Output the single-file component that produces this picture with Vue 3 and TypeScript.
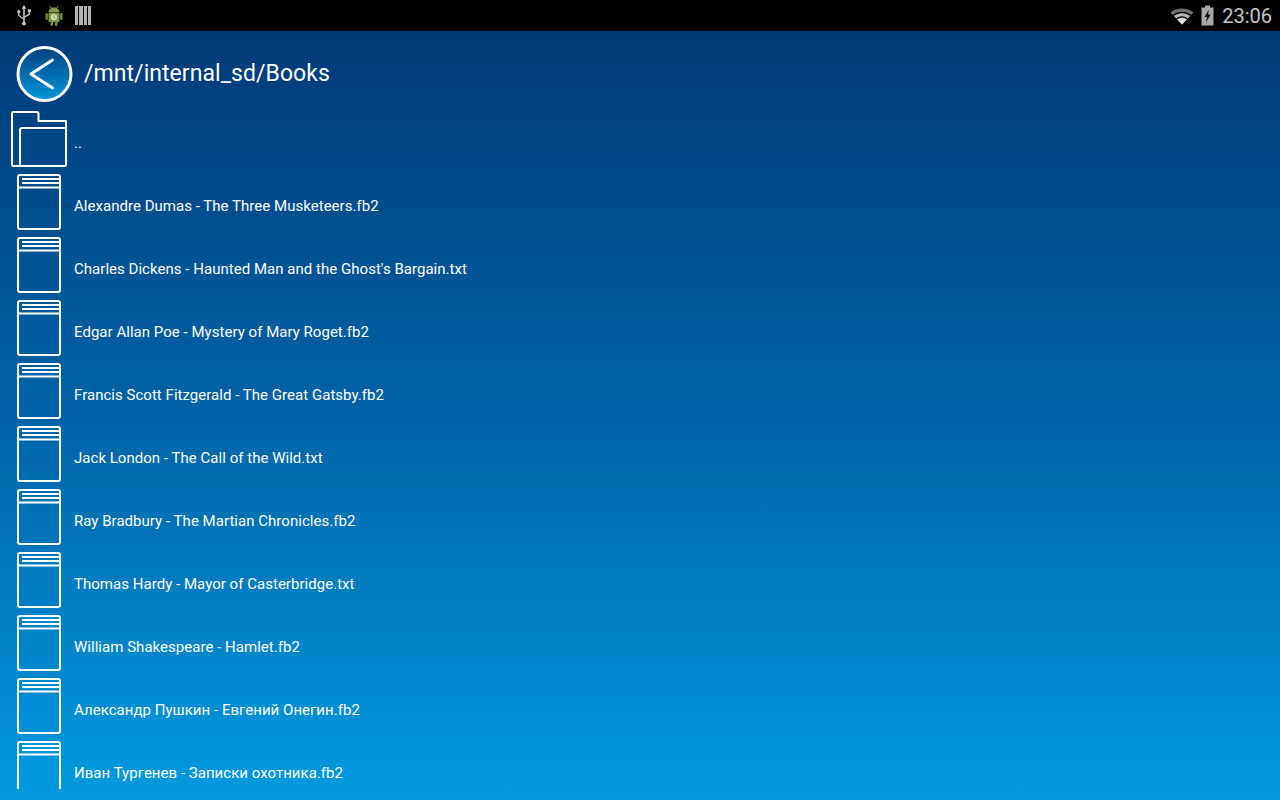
<script setup lang="ts">
const books = [
  'Alexandre Dumas - The Three Musketeers.fb2',
  "Charles Dickens - Haunted Man and the Ghost's Bargain.txt",
  'Edgar Allan Poe - Mystery of Mary Roget.fb2',
  'Francis Scott Fitzgerald - The Great Gatsby.fb2',
  'Jack London - The Call of the Wild.txt',
  'Ray Bradbury - The Martian Chronicles.fb2',
  'Thomas Hardy - Mayor of Casterbridge.txt',
  'William Shakespeare - Hamlet.fb2',
  'Александр Пушкин - Евгений Онегин.fb2',
  'Иван Тургенев - Записки охотника.fb2',
]
</script>

<template>
  <div class="screen">
    <div class="status">
      <div class="status-left">
        <svg width="16" height="21" viewBox="0 0 16 22" class="usb">
          <path d="M8 1 L8 20" stroke="#c4c4c4" stroke-width="1.7" fill="none" />
          <path d="M8 0 L10.5 4 L5.5 4 Z" fill="#c4c4c4" />
          <path d="M8 15 L2.5 11 L2.5 8 M8 13 L13.5 9.5 L13.5 7" stroke="#c4c4c4" stroke-width="1.4" fill="none" />
          <circle cx="2.5" cy="7" r="1.7" fill="#c4c4c4" />
          <rect x="12" y="4.5" width="3.2" height="3" fill="#c4c4c4" />
          <circle cx="8" cy="19.5" r="2" fill="#c4c4c4" />
        </svg>
        <svg width="18" height="21" viewBox="0 0 18 21" class="android">
          <path d="M5 1 L6.5 3.5 M13 1 L11.5 3.5" stroke="#7f9c44" stroke-width="1" />
          <path d="M3.5 7.5 C3.5 4.5 6 2.5 9 2.5 C12 2.5 14.5 4.5 14.5 7.5 Z" fill="#7f9c44" />
          <rect x="3.5" y="8" width="11" height="9" rx="1.2" fill="#7f9c44" />
          <rect x="0.5" y="8" width="2.4" height="7" rx="1.2" fill="#6f8a3a" />
          <rect x="15.1" y="8" width="2.4" height="7" rx="1.2" fill="#6f8a3a" />
          <rect x="5.5" y="16" width="2.6" height="5" rx="1.2" fill="#6f8a3a" />
          <rect x="9.9" y="16" width="2.6" height="5" rx="1.2" fill="#6f8a3a" />
          <circle cx="9" cy="12.3" r="3" fill="#d3dcc0" />
          <path d="M9 10.5 L9 12.5 L10.5 13.3" stroke="#6d8636" stroke-width="0.8" fill="none" />
        </svg>
        <div class="bars"><span v-for="n in 4" :key="n"></span></div>
      </div>
      <div class="status-right">
        <svg width="24" height="18" viewBox="0 0 24 18">
          <path d="M12 17.5 L0.5 5.5 C6.5 0 17.5 0 23.5 5.5 Z" fill="#6f6f6f" />
          <path d="M12 17.5 L4 9 C8.5 5.5 15.5 5.5 20 9 Z" fill="#b5b5b5" />
          <path d="M12 17.5 L7.5 12.6 C10 11 14 11 16.5 12.6 Z" fill="#e0e0e0" />
          <path d="M3.3 8.2 C8.3 4.3 15.7 4.3 20.7 8.2 M6.7 11.8 C10 9.4 14 9.4 17.3 11.8" stroke="#000" stroke-width="1.3" fill="none" />
        </svg>
        <svg width="13" height="21" viewBox="0 0 13 21" class="battery">
          <path d="M4 0.5 H9 V2.5 H12.5 V20.5 H0.5 V2.5 H4 Z" fill="#a8a8a8" />
          <path d="M7.8 4.5 L3.5 12 H6 L5 17.5 L9.6 9.5 H7 Z" fill="#111" />
        </svg>
        <span class="clock">23:06</span>
      </div>
    </div>

    <div class="header">
      <svg width="58" height="58" viewBox="0 0 58 58" class="back">
        <defs>
          <linearGradient id="backFill" x1="0" y1="0" x2="0" y2="1">
            <stop offset="0" stop-color="#00427f" />
            <stop offset="1" stop-color="#0096dc" />
          </linearGradient>
        </defs>
        <circle cx="29.5" cy="29" r="26.5" fill="url(#backFill)" stroke="#fff" stroke-width="3" />
        <path d="M37.5 15 L16 29 L37.5 43" fill="none" stroke="#fff" stroke-width="3" stroke-linecap="round" stroke-linejoin="round" />
      </svg>
      <span class="path">/mnt/internal_sd/Books</span>
    </div>

    <div class="list">
      <div class="row row-folder">
        <svg width="56" height="56" viewBox="0 0 56 56" class="folder">
          <path d="M2 55 H53.5 Q55 55 55 53.5 V10 H27.5 V3 Q27.5 1 26 1 H2.5 Q1 1 1 2.5 V53.5 Q1 55 2 55 Z" fill="none" stroke="#fff" stroke-width="2" stroke-linejoin="round" />
          <path d="M9 55 V19 Q9 17 11 17 H55" fill="none" stroke="#fff" stroke-width="2" />
        </svg>
        <span class="name">..</span>
      </div>
      <div v-for="book in books" :key="book" class="row">
        <svg width="44" height="56" viewBox="0 0 44 56" class="book">
          <rect x="1" y="1" width="42" height="54" rx="2" fill="none" stroke="#fff" stroke-width="2" />
          <path d="M1 13.5 H43" stroke="#fff" stroke-width="2" />
          <path d="M5 5 H43 M5 9 H43" stroke="#fff" stroke-width="1.8" />
        </svg>
        <span class="name">{{ book }}</span>
      </div>
    </div>
  </div>
</template>

<style scoped>
.screen {
  width: 1280px;
  height: 800px;
  display: flex;
  flex-direction: column;
  padding-bottom: 11px;
  box-sizing: border-box;
  overflow: hidden;
  background: linear-gradient(#003a78 31px, #0064a8 420px, #0096dc 770px, #0098de 800px);
  font-family: Roboto, "Noto Sans", sans-serif;
  color: #fff;
}
.status {
  height: 31px;
  flex: none;
  background: #000;
  display: flex;
  justify-content: space-between;
  align-items: center;
}
.status-left {
  display: flex;
  align-items: center;
  padding-left: 16px;
}
.android {
  margin-left: 13px;
}
.bars {
  margin-left: 12px;
  width: 16px;
  height: 19px;
  display: flex;
  gap: 1px;
}
.bars span {
  flex: 1;
  background: #b4b4b4;
}
.status-right {
  display: flex;
  align-items: center;
  padding-right: 8px;
}
.battery {
  margin-left: 7px;
}
.clock {
  margin-left: 8px;
  font-size: 20px;
  color: #c4c4c4;
}
.header {
  height: 80px;
  flex: none;
  display: flex;
  align-items: center;
  padding-left: 15px;
  padding-top: 5px;
  box-sizing: border-box;
}
.path {
  margin-left: 11px;
  font-size: 23px;
  letter-spacing: 0.05px;
}
.list {
  flex: 1;
  min-height: 0;
  overflow: hidden;
}
.row {
  height: 63px;
  display: flex;
  align-items: flex-start;
  padding-left: 17px;
}
.row-folder {
  padding-left: 11px;
}
.book {
  flex: none;
}
.folder {
  flex: none;
}
.name {
  margin-left: 13px;
  margin-top: 23px;
  font-size: 15px;
  line-height: 18px;
  letter-spacing: 0.03px;
  white-space: nowrap;
}
.row-folder .name {
  margin-left: 7px;
}
</style>
